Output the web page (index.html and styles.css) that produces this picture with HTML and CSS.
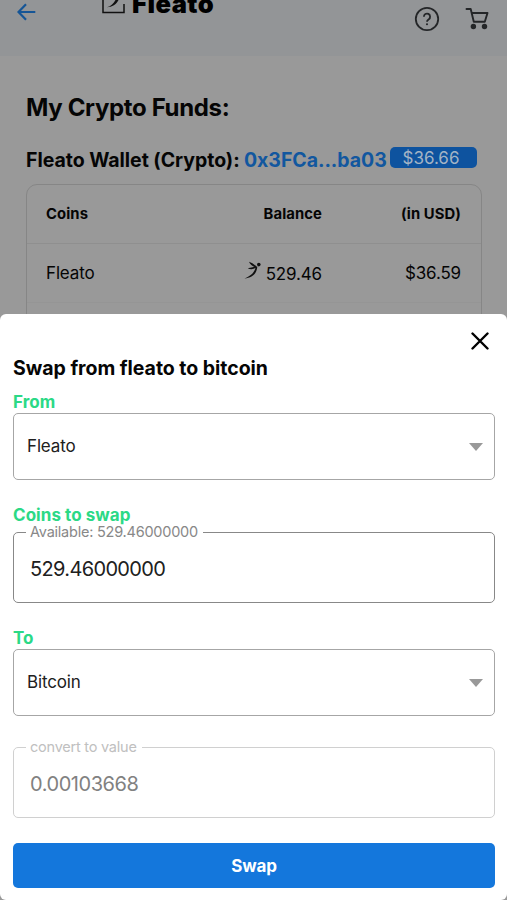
FILE: index.html
```html
<!DOCTYPE html>
<html lang="en">
<head>
<meta charset="utf-8">
<title>Fleato – Swap</title>
<link rel="stylesheet" href="styles.css">
</head>
<body>
<header class="topbar">
  <svg class="back" width="20" height="18" viewBox="0 0 20 18"><path d="M18.3 9H1.500M9 1.200 1.500 9 9 16.800" fill="none" stroke="#155596" stroke-width="2.200"/></svg>
  <div class="brand">
    <svg width="24" height="15" viewBox="0 0 24 15"><path d="M1 0v12.500h21V4" fill="none" stroke="#111" stroke-width="1.5"/><path d="M5 7.300C10 7 14.500 4.500 16.500 0H13.500C11.500 3.800 9 6 5 7.300Z" fill="#111"/></svg>
    <span class="brand-name">Fleato</span>
  </div>
  <svg class="help" width="26" height="26" viewBox="0 0 26 26"><circle cx="13" cy="13" r="11.2" fill="none" stroke="#242628" stroke-width="1.8"/><path d="M9.900 10.700a3.100 3.100 0 1 1 4.900 2.500c-1.200.8-1.800 1.300-1.800 2.600" fill="none" stroke="#242628" stroke-width="1.800"/><circle cx="13" cy="18.200" r="1.050" fill="#242628"/></svg>
  <svg class="cart" width="24" height="24" viewBox="0 0 24 24"><path d="M1.500 2h4.200l3.100 12.700h11L22.500 6H7" fill="none" stroke="#242628" stroke-width="1.900" stroke-linejoin="round" stroke-linecap="round"/><circle cx="8.400" cy="19.500" r="2.700" fill="#242628"/><circle cx="19.500" cy="19.500" r="2.700" fill="#242628"/></svg>
</header>
<main class="funds">
  <h1>My Crypto Funds:</h1>
  <div class="wallet">
    <span class="wallet-name">Fleato Wallet (Crypto):</span>
    <span class="address">0x3FCa...ba03</span>
    <span class="total">$36.66</span>
  </div>
  <section class="table">
    <div class="row head"><span>Coins</span><span>Balance</span><span>(in USD)</span></div>
    <div class="row">
      <span>Fleato</span>
      <span class="amount"><svg width="18" height="18" viewBox="0 0 18 18"><path d="M.5 17.500C8 17 13 12.500 13.300 5.500h-1.500C11 11 7 15 .5 17.500Z"/><path d="M5 .8Q8.500 1.500 12.500 5.500L11.300 6.500Q6.500 4.500 5 .8ZM3.800 7.200 12 5.500v1.300Q7.500 9.500 3.800 7.200Z"/><circle cx="14.800" cy="3.600" r="1.800"/></svg><span class="coins">529.46</span></span>
      <span>$36.59</span>
    </div>
    <div class="row"></div>
  </section>
</main>
<section class="sheet">
  <svg class="close" width="18" height="18" viewBox="0 0 18 18"><path d="m1.500 1.500 15 15m0-15-15 15" fill="none" stroke="#000" stroke-width="2.400" stroke-linecap="round"/></svg>
  <h2>Swap from fleato to bitcoin</h2>
  <div class="label">From</div>
  <div class="select"><span class="from-value">Fleato</span><i class="caret"></i></div>
  <div class="label coins-label">Coins to swap</div>
  <fieldset class="field"><legend class="available">Available: 529.46000000</legend><div class="value">529.46000000</div></fieldset>
  <div class="label to-label">To</div>
  <div class="select"><span class="to-value">Bitcoin</span><i class="caret"></i></div>
  <fieldset class="field disabled"><legend class="convert">convert to value</legend><div class="value">0.00103668</div></fieldset>
  <button class="swap">Swap</button>
</section>
</body>
</html>
```
FILE: styles.css
```css
* { box-sizing: border-box; }
body {
  margin: 0;
  height: 900px;
  overflow: hidden;
  background: #999;
  color: #050505;
  font-family: Inter, "Liberation Sans", sans-serif;
}
h1, h2 { margin: 0; font-weight: 650; white-space: nowrap; }
svg { display: block; flex: none; }

.topbar {
  height: 56px;
  display: flex;
  align-items: flex-start;
  background: #939597;
}
.back { margin: 3px 0 0 17px; }
.brand { display: flex; margin-left: 65px; width: 130px; }
.brand-name {
  margin: -10px 0 0 6px;
  font: 900 25.500px/28px Inter, sans-serif;
  letter-spacing: .5px;
  color: #000;
}
.help { margin: 6px 0 0 182px; }
.cart { margin: 7px 0 0 25px; }

.funds { padding: 36px 25px 0 26px; }
h1 { font-size: 24px; line-height: 32px; letter-spacing: -.35px; }
.wallet {
  display: flex;
  margin-top: 23px;
  height: 26px;
  font-size: 19.500px;
  font-weight: 650;
  line-height: 26px;
  white-space: nowrap;
}
.wallet-name { width: 218px; letter-spacing: -.03px; }
.address { width: 146px; color: #12579f; letter-spacing: -.05px; }
.total {
  width: 87px;
  height: 21px;
  padding-right: 5px;
  border-radius: 5px;
  background: #0e539f;
  color: #a3b4c5;
  font-size: 17px;
  font-weight: 400;
  line-height: 22px;
  text-align: center;
}
.table {
  margin-top: 11px;
  border: 1px solid #868686;
  border-radius: 11px;
  height: 180px;
}
.row {
  display: grid;
  grid-template-columns: 120px 1fr 139px;
  height: 59px;
  padding: 0 20px 0 19px;
  align-items: center;
  border-bottom: 1px solid #8f8f8f;
  font-size: 17px;
  letter-spacing: -.15px;
}
.row + .row { border-color: #959595; }
.row > :not(:first-child) { text-align: right; }
.head { font-size: 14.800px; font-weight: 650; letter-spacing: .1px; }
.amount { display: flex; justify-content: flex-end; align-items: center; gap: 4px; }
.amount svg { margin-top: -6px; fill: #111; }
.coins { padding-top: 2px; }

.sheet {
  position: absolute;
  inset: 314px 0 0;
  padding: 18px 12px 0 13px;
  background: #fff;
  border-radius: 6px;
  display: flex;
  flex-direction: column;
}
.close { margin: 0 6px 0 auto; }
h2 { margin-top: 6px; font-size: 19.500px; line-height: 24px; letter-spacing: -.03px; }
.label {
  height: 20px;
  margin-top: 12px;
  color: #2bd986;
  font-size: 17px;
  font-weight: 650;
  line-height: 20px;
  letter-spacing: .05px;
}
.coins-label { margin-top: 25px; }
.to-label { margin-top: 25px; }
.select {
  height: 67px;
  margin-top: 1px;
  padding: 0 11px 2px 13px;
  border: 1px solid #a6a6a6;
  border-radius: 5px;
  display: flex;
  align-items: center;
  justify-content: space-between;
  color: #202020;
  font-size: 17px;
  letter-spacing: -.15px;
}
.caret {
  margin-top: 2px;
  border: 7px solid transparent;
  border-top: 8px solid #999;
  border-bottom: 0;
}
.field {
  min-width: 0;
  height: 79px;
  margin: -1px 0 0;
  padding: 0 16px;
  border: 1px solid #888;
  border-radius: 5px;
  color: #202020;
}
legend {
  height: 16px;
  margin-left: -4px;
  padding: 0 5px 0 4px;
  color: #888;
  font-size: 14.500px;
  line-height: 16px;
  letter-spacing: -.23px;
}
.value { margin-top: 16px; font-size: 20px; line-height: 26px; letter-spacing: -.65px; }
.disabled { margin-top: 23px; border-color: #d0d0d0; color: #818181; }
.disabled .value { letter-spacing: -.45px; }
.disabled legend { color: #c0c0c0; }
.swap {
  height: 45px;
  margin-top: 25px;
  flex: none;
  border: 0;
  border-radius: 5px;
  background: #1477dc;
  color: #fff;
  font: 650 17px/45px Inter, sans-serif;
  letter-spacing: -.1px;
}
```
